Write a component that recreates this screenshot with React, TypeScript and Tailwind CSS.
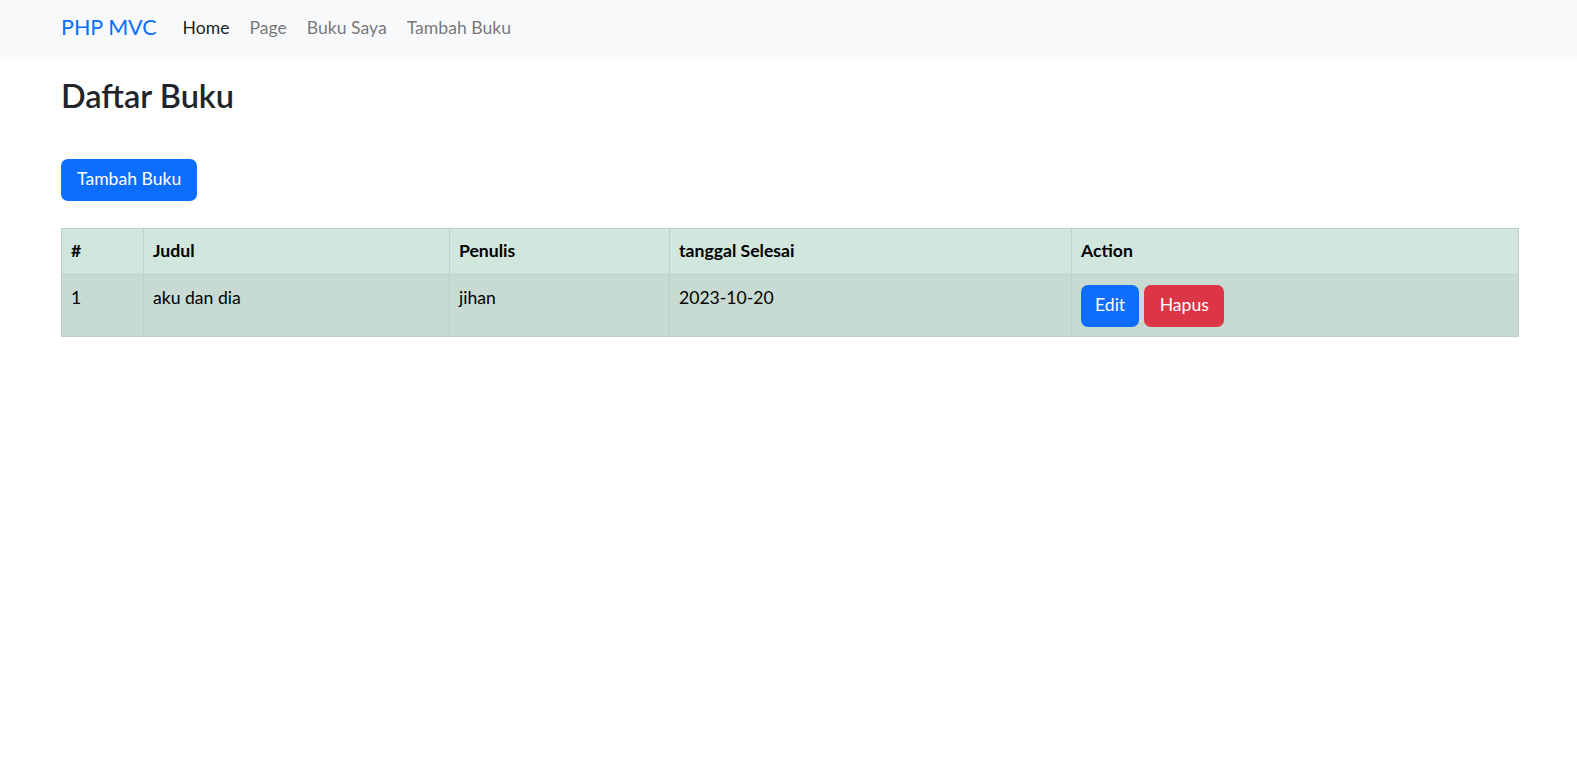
import React from "react";

const font = { fontFamily: "Lato, 'Noto Sans', sans-serif" };

const books = [
  { id: 1, judul: "aku dan dia", penulis: "jihan", selesai: "2023-10-20" },
];

function Navbar() {
  return (
    <nav className="h-[57px] bg-[#f8f9fa] flex items-center pl-[61px] pb-[2px]">
      <a className="text-[21.5px] text-[#0d6efd] mr-[26px] leading-none">PHP MVC</a>
      <ul className="flex items-center text-[17.6px] leading-none">
        <li className="text-[rgba(0,0,0,0.9)]">Home</li>
        <li className="ml-[20px] text-[rgba(0,0,0,0.55)]">Page</li>
        <li className="ml-[20px] text-[rgba(0,0,0,0.55)]">Buku Saya</li>
        <li className="ml-[20px] text-[rgba(0,0,0,0.55)]">Tambah Buku</li>
      </ul>
    </nav>
  );
}

export default function App() {
  return (
    <div className="min-h-screen bg-white text-[#212529]" style={font}>
      <Navbar />
      <main className="pl-[61px] pr-[58px]">
        <h2 className="mt-[19px] text-[32.5px] leading-[1.25] font-semibold">Daftar Buku</h2>

        <button className="mt-[42px] h-[42px] px-[16px] bg-[#0d6efd] text-white text-[17.6px] rounded-[7px]">
          Tambah Buku
        </button>

        <table className="mt-[27px] w-full border-collapse text-[17.6px] text-black">
          <colgroup>
            <col className="w-[82px]" />
            <col className="w-[306px]" />
            <col className="w-[220px]" />
            <col className="w-[402px]" />
            <col />
          </colgroup>
          <thead>
            <tr className="bg-[#d1e7dd] h-[46px]">
              {["#", "Judul", "Penulis", "tanggal Selesai", "Action"].map((h) => (
                <th
                  key={h}
                  className="border border-[#bcd0c7] px-[9px] py-[9px] text-left font-bold leading-[26px]"
                >
                  {h}
                </th>
              ))}
            </tr>
          </thead>
          <tbody>
            {books.map((b) => (
              <tr key={b.id} className="bg-[#c7dbd2]">
                <td className="border border-[#bcd0c7] px-[9px] pt-[10px] pb-[9px] align-top leading-[26px]">{b.id}</td>
                <td className="border border-[#bcd0c7] px-[9px] pt-[10px] pb-[9px] align-top leading-[26px]">{b.judul}</td>
                <td className="border border-[#bcd0c7] px-[9px] pt-[10px] pb-[9px] align-top leading-[26px]">{b.penulis}</td>
                <td className="border border-[#bcd0c7] px-[9px] pt-[10px] pb-[9px] align-top leading-[26px]">{b.selesai}</td>
                <td className="border border-[#bcd0c7] px-[9px] pt-[10px] pb-[9px] align-top">
                  <div className="flex gap-[5px]">
                    <button className="h-[42px] px-[14px] bg-[#0d6efd] text-white rounded-[7px]">Edit</button>
                    <button className="h-[42px] px-[15.5px] bg-[#dc3545] text-white rounded-[7px]">Hapus</button>
                  </div>
                </td>
              </tr>
            ))}
          </tbody>
        </table>
      </main>
    </div>
  );
}
